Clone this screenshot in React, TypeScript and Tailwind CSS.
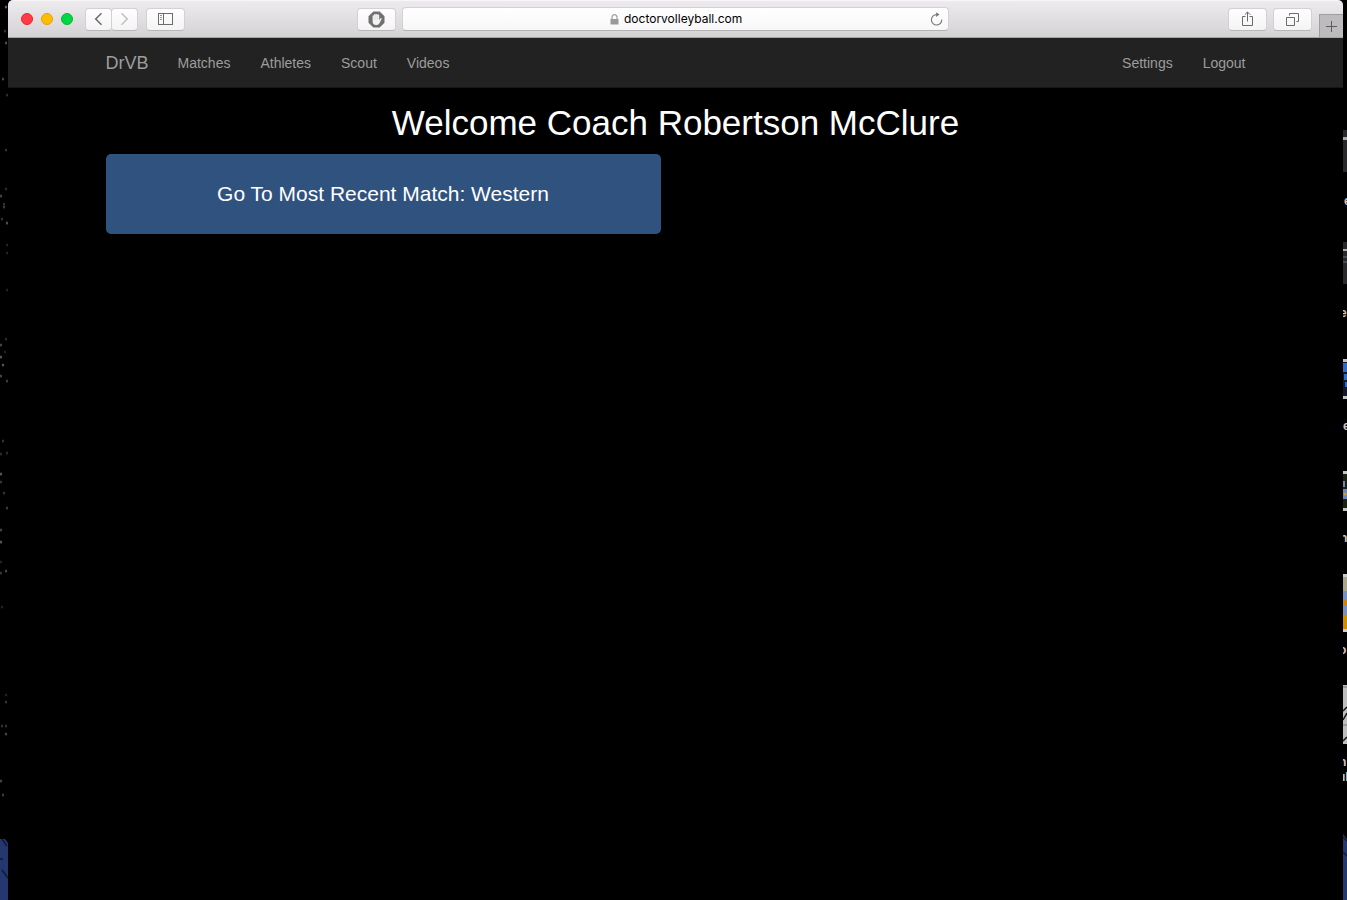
import type { ReactNode } from "react";

const toolButton =
  "flex h-[23px] items-center justify-center rounded-[4px] border border-[#d3d1d3] border-b-[#b9b7b9] bg-linear-to-b from-[#fefefe] to-[#f4f4f4] text-[#6b6b6b]";

function ToolButton({ label, width, children }: { label: string; width: string; children: ReactNode }) {
  return (
    <button type="button" aria-label={label} className={`${toolButton} ${width}`}>
      {children}
    </button>
  );
}

function TrafficLights() {
  return (
    <div className="flex gap-2">
      <button type="button" aria-label="Close" className="size-3 rounded-full border border-[#f0202c] bg-[#ff3b47]" />
      <button type="button" aria-label="Minimize" className="size-3 rounded-full border border-[#e5a010] bg-[#ffbd00]" />
      <button type="button" aria-label="Zoom" className="size-3 rounded-full border border-[#0cb92c] bg-[#00d742]" />
    </div>
  );
}

function BrowserBar() {
  return (
    <header className="grid h-[38px] grid-cols-[1fr_minmax(0,547px)_1fr] items-center rounded-t-[5px] border-t border-b border-t-[#f8f6f8] border-b-[#a5a3a5] bg-linear-to-b from-[#edebee] to-[#d4d2d4]">
      <div className="flex items-center pr-[6px] pl-[13px]">
        <TrafficLights />
        <div className="ml-3 flex">
          <ToolButton label="Back" width="w-[27px]">
            <svg width="10" height="14" viewBox="0 0 10 14" fill="none" stroke="currentColor" strokeWidth="1.5">
              <path d="M7.500 1.200 1.700 7l5.800 5.800" />
            </svg>
          </ToolButton>
          <button type="button" aria-label="Forward" disabled className={`${toolButton} -ml-px w-[27px]`}>
            <svg width="10" height="14" viewBox="0 0 10 14" fill="none" stroke="#c0c0c0" strokeWidth="1.5">
              <path d="M1.500 1.200 7.300 7l-5.800 5.800" />
            </svg>
          </button>
        </div>
        <div className="ml-2">
          <ToolButton label="Show sidebar" width="w-[39px]">
            <svg width="15" height="12" viewBox="0 0 15 12" fill="none" stroke="currentColor" shapeRendering="crispEdges">
              <path d="M.5.5h14v11H.5zM5.5.5v11" />
              <path d="M2 2.5h2M2 4.5h2M2 6.5h2" strokeOpacity=".7" />
            </svg>
          </ToolButton>
        </div>
        <div className="ml-auto">
          <ToolButton label="Content blocker" width="w-[39px]">
            <svg width="17" height="17" viewBox="0 0 17 17">
              <path d="M5.300.5h6.400l4.800 4.800v6.400l-4.800 4.800H5.300L.5 11.700V5.300z" fill="#707070" />
              <path d="M4.600 5c0-.9 1.200-.9 1.400-.2.100-1.300.2-1.900.9-1.900.5 0 .8.300.9.700.2-.8 1.700-.8 1.800.1.200-.5 1.600-.5 1.600.6v4.900l1.200-1.800c.5-.7 1.500-.3 1.200.5l-2 4.100c-.7 1.300-1.500 1.900-2.900 1.900H8c-2.200 0-3.400-1.400-3.400-3.500z" fill="#f2f2f2" />
              <path d="M6.200 5v3.500M7.900 4v4.500M9.600 4.200v4.300" stroke="#707070" strokeOpacity=".3" strokeWidth=".4" />
            </svg>
          </ToolButton>
        </div>
      </div>

      <div className="flex h-6 items-center rounded-[4px] border border-[#d3d1d3] border-b-[#b3b1b3] bg-linear-to-b from-white to-[#f7f7f7] pr-[5px] pl-[21px]">
        <label className="flex flex-1 items-center justify-center gap-[5px]">
          <svg width="9" height="11" viewBox="0 0 9 11" aria-hidden="true">
            <path d="M2 5V3.200a2.500 2.500 0 0 1 5 0V5" fill="none" stroke="#a0a0a0" strokeWidth="1.200" />
            <rect x=".5" y="5" width="8" height="5.500" rx=".5" fill="#999" />
          </svg>
          <input
            type="text"
            aria-label="Address"
            defaultValue="doctorvolleyball.com"
            className="w-[120px] bg-transparent font-['Inter',sans-serif] text-[12px] leading-4 text-black outline-none"
          />
        </label>
        <button type="button" aria-label="Reload" className="text-[#777]">
          <svg width="13" height="14" viewBox="0 0 13 14" fill="none" stroke="currentColor" strokeWidth="1.100">
            <path d="M11.800 7.500A5.200 5.200 0 1 1 6.600 2.600H8" />
            <path d="M6.200.2 9.500 2.600 6.200 5z" fill="currentColor" stroke="none" />
          </svg>
        </button>
      </div>

      <div className="flex items-center justify-end self-stretch">
        <div className="flex gap-[6px]">
          <ToolButton label="Share" width="w-[39px]">
            <svg width="13" height="16" viewBox="0 0 13 16" fill="none" stroke="currentColor">
              <path d="M4.500 5.500h-3v9h10v-9h-3M6.500 10.500V1M3.800 3.700 6.500 1l2.700 2.700" />
            </svg>
          </ToolButton>
          <ToolButton label="Show all tabs" width="w-[39px]">
            <svg width="13" height="13" viewBox="0 0 13 13" fill="none" stroke="currentColor">
              <path d="M.5 4.500h8v8h-8zM3.500 2.500v-2h9v8h-2" />
            </svg>
          </ToolButton>
        </div>
        <button type="button" aria-label="New tab" className="ml-[7px] flex h-[23px] w-6 items-center justify-center self-end border-t border-l border-[#9f9da0] bg-[#bdbbbe] text-[#5c5c5c]">
          <svg width="11" height="11" viewBox="0 0 11 11" stroke="currentColor">
            <path d="M5.500 0v11M0 5.500h11" />
          </svg>
        </button>
      </div>
    </header>
  );
}

const links = ["Matches", "Athletes", "Scout", "Videos"];
const accountLinks = ["Settings", "Logout"];

function NavLink({ label }: { label: string }) {
  return (
    <a href="#" className="px-[15px] text-[14px] leading-5 text-[#9d9d9d]">
      {label}
    </a>
  );
}

function NavBar() {
  return (
    <nav className="border-b border-[#161616] bg-[#222222]">
      <div className="mx-auto flex h-[49px] max-w-[1170px] items-center">
        <a href="#" className="pr-[14px] pl-[15px] text-[18px] leading-5 text-[#9d9d9d]">
          DrVB
        </a>
        <div className="flex">
          {links.map((label) => (
            <NavLink key={label} label={label} />
          ))}
        </div>
        <div className="ml-auto flex">
          {accountLinks.map((label) => (
            <NavLink key={label} label={label} />
          ))}
        </div>
      </div>
    </nav>
  );
}

const leftSpecks: [number, number, number][] = [
  [6, 7, 0.6], [5, 31, 0.3], [6, 43, 0.45], [3, 79, 0.4], [7, 95, 0.25], [6, 150, 0.3], [6, 189, 0.25],
  [1, 196, 0.4], [4, 204, 0.3], [4, 207, 0.35], [2, 219, 0.3], [7, 223, 0.45], [7, 245, 0.2], [7, 253, 0.2],
  [7, 290, 0.2], [6, 339, 0.25], [1, 345, 0.4], [5, 352, 0.2], [1, 357, 0.5], [3, 365, 0.5], [1, 376, 0.4],
  [7, 381, 0.35], [3, 441, 0.3], [7, 453, 0.25], [1, 454, 0.25], [1, 474, 0.5], [1, 482, 0.3], [4, 493, 0.3],
  [7, 508, 0.35], [1, 530, 0.4], [1, 542, 0.5], [1, 562, 0.2], [6, 571, 0.4], [1, 573, 0.3], [2, 607, 0.2],
  [6, 695, 0.2], [6, 702, 0.3], [2, 726, 0.3], [6, 726, 0.3], [6, 734, 0.4], [1, 781, 0.4], [3, 795, 0.35],
];

function DesktopLeft() {
  return (
    <svg className="w-2" height="900" viewBox="0 0 8 900" aria-hidden="true">
      {leftSpecks.map(([x, y, opacity]) => (
        <ellipse key={`${x}-${y}`} cx={x} cy={y} rx="1.200" ry="1.500" fill="#aaaaaa" opacity={opacity} />
      ))}
      <path d="M0 839h5l3 4v57H0z" fill="#24376f" />
      <path d="m2 839 5 7M0 859h3M2 870l6 8" stroke="#101935" strokeWidth="1.500" />
    </svg>
  );
}

function DesktopRight() {
  return (
    <svg className="w-1" height="900" viewBox="0 0 4 900" aria-hidden="true">
      <path d="M0 130h4v42H0zM0 242h4v42H0z" fill="#29292b" />
      <path d="M0 137h4v3H0zM0 249h4v2H0z" fill="#aaaaaa" />
      <path d="M0 257h4M0 262h4" stroke="#697080" />
      <path d="M0 359h4v40H0z" fill="#c4c4c4" />
      <path d="M0 362h4v34H0z" fill="#10182a" />
      <path d="M0 363h4v9H0zM1 374h3v6H1zM2 382h2v5H2z" fill="#2f6cc5" />
      <path d="M0 471h4v40H0z" fill="#c4c4c4" />
      <path d="M0 474h4v34H0z" fill="#1b2110" />
      <path d="M0 481h2v6H0zM0 489h4v10H0z" fill="#6b86bd" />
      <circle cx="2" cy="494" r="1.500" fill="#e39a19" />
      <path d="M0 574h4v58H0z" fill="#cccccc" />
      <path d="M0 577h4v14H0z" fill="#aaa68c" />
      <path d="M0 591h4v25H0z" fill="#7891c4" />
      <path d="M0 613l4 3v13H0z" fill="#cf9000" />
      <circle cx="3" cy="603" r="3" fill="#d08309" />
      <path d="M0 685h4v59H0z" fill="#bdbdbd" />
      <path d="M0 687h4M0 725h4" stroke="#777777" />
      <path d="m0 711 4-4M0 720l4-7M0 741l4-4" stroke="#111111" strokeWidth="1.500" />
      <g fill="#c8c8c8" fontFamily="Liberation Sans, sans-serif" fontSize="12" fontWeight="700">
        <text x="1" y="205">e</text>
        <text x="-3" y="317">e</text>
        <text x="0" y="430">e</text>
        <text x="-3" y="542">n</text>
        <text x="-4" y="654">o</text>
        <text x="-4" y="766">n</text>
        <text x="-5" y="781">ul</text>
      </g>
      <path d="M0 834l4 5v61H0z" fill="#24376f" />
      <path d="m0 837 4 4M0 852l4 4" stroke="#101935" strokeWidth="1.500" />
    </svg>
  );
}

export default function App() {
  return (
    <div className="grid min-h-screen grid-cols-[8px_minmax(0,1fr)_4px] bg-black font-['Liberation_Sans',Arial,sans-serif]">
      <DesktopLeft />
      <div className="flex flex-col">
        <BrowserBar />
        <NavBar />
        <main className="mx-auto w-full max-w-[1170px] px-[15px] pt-[15px]">
          <h1 className="text-center text-[35px] leading-10 text-white">Welcome Coach Robertson McClure</h1>
          <div className="mt-[11px] grid grid-cols-2 gap-[30px]">
            <button type="button" className="h-20 rounded-[5px] bg-[#30527f] text-[21px] leading-8 text-white">
              Go To Most Recent Match: Western
            </button>
          </div>
        </main>
      </div>
      <DesktopRight />
    </div>
  );
}
